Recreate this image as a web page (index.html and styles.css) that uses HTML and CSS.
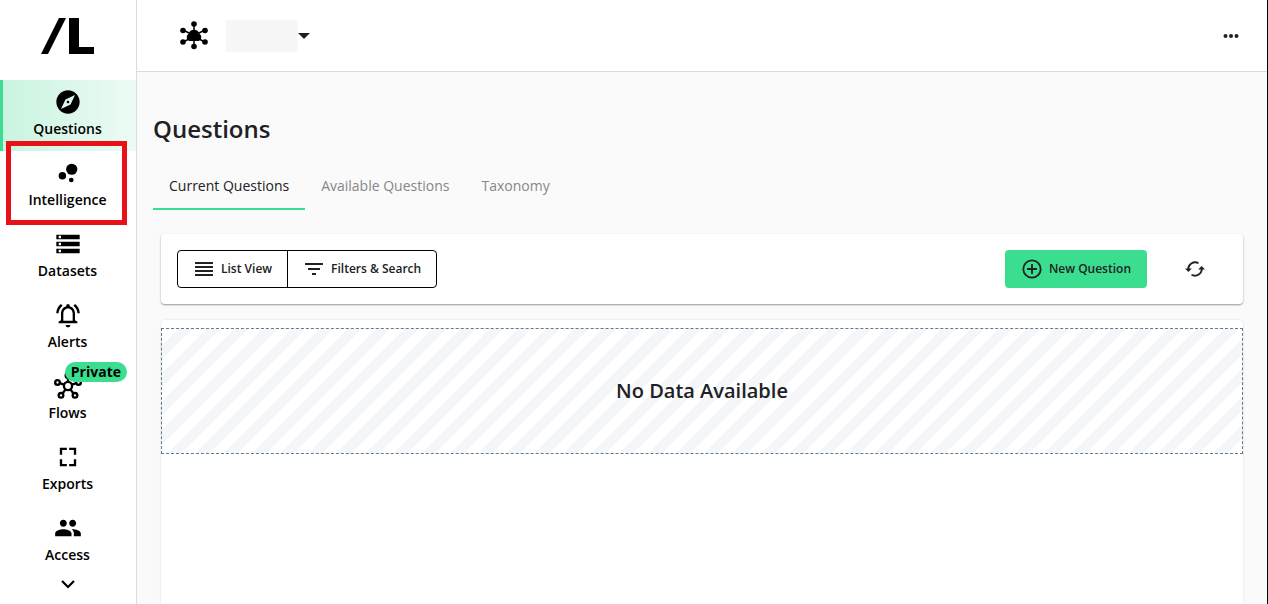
FILE: index.html
```html
<!DOCTYPE html>
<html lang="en">
<head>
<meta charset="utf-8">
<meta name="viewport" content="width=device-width, initial-scale=1">
<title>Questions</title>
<link rel="stylesheet" href="styles.css">
</head>
<body>
<div class="app">
  <nav class="sidebar" aria-label="Main">
    <a class="logo" href="#" aria-label="Home">
      <svg width="54" height="36" viewBox="0 0 54 36"><path d="M18 0h7L7 36H0z M28 0h10v29h15v7H28z"/></svg>
    </a>
    <a class="nav-item active" href="#">
      <svg class="icon" viewBox="0 0 24 24"><path d="M12 10.9c-.61 0-1.1.49-1.1 1.1s.49 1.1 1.1 1.1c.61 0 1.1-.49 1.1-1.1s-.49-1.1-1.1-1.1zM12 2C6.48 2 2 6.48 2 12s4.48 10 10 10 10-4.480 10-10S17.520 2 12 2zm2.190 12.190L6 18l3.810-8.190L18 6l-3.810 8.190z"/></svg>
      <span>Questions</span>
    </a>
    <a class="nav-item marked" href="#">
      <svg class="icon" viewBox="0 0 24 24"><circle cx="7.200" cy="14.400" r="3.200"/><circle cx="14.800" cy="18" r="2"/><circle cx="15.200" cy="8.800" r="4.800"/></svg>
      <span>Intelligence</span>
    </a>
    <a class="nav-item" href="#">
      <svg class="icon" viewBox="0 0 24 24"><path d="M2 20h20v-4H2v4zm2-3h2v2H4v-2zM2 4v4h20V4H2zm4 3H4V5h2v2zm-4 7h20v-4H2v4zm2-3h2v2H4v-2z"/></svg>
      <span>Datasets</span>
    </a>
    <a class="nav-item" href="#">
      <svg class="icon" viewBox="0 0 24 24"><path d="M12 22.500c1.100 0 2-.9 2-2h-4c0 1.100.9 2 2 2zm6-6V11c0-3.100-1.600-5.700-4.500-6.400V4c0-.8-.7-1.500-1.500-1.500s-1.500.7-1.500 1.500v.6C7.600 5.300 6 7.900 6 11v5.500l-2 1V19h16v-1.500l-2-1zm-2 .5H8v-6c0-2.500 1.500-4.500 4-4.500s4 2 4 4.500v6zM7.400 4.100L5.900 2.600C3.500 4.400 2 7.200 1.900 10.500h2c.1-2.700 1.500-5 3.500-6.400zm12.700 6.400h2c-.1-3.300-1.600-6.100-4-7.900l-1.500 1.500c2 1.400 3.400 3.700 3.500 6.400z"/></svg>
      <span>Alerts</span>
    </a>
    <a class="nav-item" href="#">
      <svg class="icon" viewBox="0 0 24 24"><g fill="none" stroke="#000" stroke-width="2"><circle cx="12" cy="12" r="3.500"/><circle cx="12" cy="3" r="2"/><circle cx="3" cy="9" r="2"/><circle cx="21" cy="9" r="2"/><circle cx="6" cy="20" r="2"/><circle cx="18" cy="20" r="2"/><path d="M12 5v3.500M4.900 9.600l3.800 1.300M19.100 9.600l-3.800 1.300M7.300 18.400l2.600-3.500M16.700 18.400l-2.600-3.500"/></g></svg>
      <span>Flows</span>
      <b class="badge">Private</b>
    </a>
    <a class="nav-item" href="#">
      <svg class="icon" viewBox="0 0 24 24"><path d="M5 10h2V6h4V4H5zM13 4v2h4v4h2V4zM5 14v6h6v-2H7v-4zM17 14v4h-4v2h6v-6z"/></svg>
      <span>Exports</span>
    </a>
    <a class="nav-item" href="#">
      <svg class="icon" viewBox="0 0 24 24"><path d="M16 11c1.660 0 2.990-1.340 2.990-3S17.660 5 16 5s-3 1.340-3 3 1.340 3 3 3zm-8 0c1.660 0 2.990-1.340 2.990-3S9.660 5 8 5 5 6.340 5 8s1.340 3 3 3zm0 2c-2.330 0-7 1.170-7 3.500V19h14v-2.500c0-2.330-4.670-3.500-7-3.500zm8 0c-.29 0-.62.02-.97.05 1.160.84 1.970 1.970 1.970 3.450V19h6v-2.500c0-2.330-4.670-3.500-7-3.500z"/></svg>
      <span>Access</span>
    </a>
    <button class="more-nav" type="button" aria-label="Scroll down"><svg width="16" height="14" viewBox="0 0 16 14"><path d="M2 4l6 6 6-6" fill="none" stroke="#000" stroke-width="2.200"/></svg></button>
  </nav>
  <div class="page">
    <header class="topbar">
      <svg width="30" height="30" viewBox="0 0 30 30"><g stroke="#000" stroke-width="1.500"><path d="M15 3v8M15 19v8M4 9l6 3M26 9l-6 3M4 21l6-3M26 21l-6-3"/></g><circle cx="15" cy="3" r="2.800"/><circle cx="15" cy="25.500" r="2.800"/><circle cx="4" cy="9.500" r="2.800"/><circle cx="26" cy="9.500" r="2.800"/><circle cx="4" cy="21" r="2.800"/><circle cx="26" cy="21" r="2.800"/><path d="M10.500 20a4 4 0 0 1-1-7.200 5.800 5.800 0 0 1 11 0 4 4 0 0 1-1 7.200z"/></svg>
      <button class="org" type="button" aria-label="Select organization"><span class="org-name"></span><i class="caret"></i></button>
      <button class="dots" type="button" aria-label="More"><svg width="16" height="6" viewBox="0 0 16 6" fill="#202124"><circle cx="2.500" cy="3" r="2"/><circle cx="8" cy="3" r="2"/><circle cx="13.500" cy="3" r="2"/></svg></button>
    </header>
    <main class="content">
      <h1>Questions</h1>
      <div class="tabs" role="tablist">
        <button class="tab selected" type="button" role="tab" aria-selected="true">Current Questions</button>
        <button class="tab" type="button" role="tab" aria-selected="false">Available Questions</button>
        <button class="tab" type="button" role="tab" aria-selected="false">Taxonomy</button>
      </div>
      <section class="card toolbar">
        <div class="group">
          <button type="button"><svg width="18" height="14" viewBox="0 0 18 14"><path d="M0 1h18M0 5h18M0 9h18M0 13h18" stroke="#202124" stroke-width="2"/></svg>List View</button>
          <button type="button"><svg width="18" height="14" viewBox="0 0 18 14"><path d="M0 2h18M3 7h12M7 12h4" stroke="#202124" stroke-width="2"/></svg>Filters &amp; Search</button>
        </div>
        <button class="primary" type="button"><svg width="20" height="20" viewBox="0 0 20 20"><g fill="none" stroke="#202124" stroke-width="1.800"><circle cx="10" cy="10" r="8.700"/><path d="M10 5v10M5 10h10"/></g></svg>New Question</button>
        <button class="refresh" type="button" aria-label="Refresh"><svg width="20" height="16" viewBox="0 0 20 16"><g fill="none" stroke="#202124" stroke-width="1.800"><path d="M3.200 9A7 7 0 0 1 13.500 2.200M16.800 7A7 7 0 0 1 6.500 13.800"/></g><path d="M0 7.500h6.800L3.400 11zM20 8.500h-6.800L16.600 5z" fill="#202124"/></svg></button>
      </section>
      <section class="card results">
        <div class="empty">No Data Available</div>
      </section>
    </main>
  </div>
</div>
</body>
</html>
```
FILE: styles.css
```css
* { box-sizing: border-box; }
body {
  margin: 0;
  font-family: "Open Sans", "Noto Sans", sans-serif;
  font-size: 14px;
  color: #202124;
}
button {
  font: inherit;
  color: inherit;
  background: none;
  border: 0;
  padding: 0;
  cursor: pointer;
}
svg { display: block; flex: none; }
.app {
  display: flex;
  height: 100vh;
  overflow: hidden;
  border-right: 1px solid #000;
}
.sidebar {
  flex: none;
  width: 137px;
  border-right: 1px solid #dcdcdc;
  background: #fff;
  display: flex;
  flex-direction: column;
}
.logo {
  flex: none;
  height: 80px;
  padding-top: 18px;
  display: flex;
  justify-content: center;
}
.nav-item {
  position: relative;
  flex: none;
  height: 71px;
  padding: 8px 1px 0 0;
  display: flex;
  flex-direction: column;
  align-items: center;
  color: #000;
  font-weight: 600;
  line-height: 20px;
  gap: 3px;
  text-decoration: none;
}
.icon { width: 28px; height: 28px; }
.active { background: linear-gradient(90deg, #c8f4df, #edfbf5); }
.active::before {
  content: "";
  position: absolute;
  inset: 0 auto 0 0;
  width: 3px;
  background: #3bdd8f;
}
.marked::after {
  content: "";
  position: absolute;
  inset: -10px 9px -3px 6px;
  border: 5px solid #e81118;
}
.badge {
  position: absolute;
  top: -2px;
  right: 9px;
  padding: 0 6px;
  border-radius: 10px;
  background: #3bdd8f;
  font-weight: 700;
}
.more-nav { align-self: center; }
.page {
  flex: 1;
  min-width: 0;
  display: flex;
  flex-direction: column;
  background: #fafafa;
}
.topbar {
  flex: none;
  height: 72px;
  padding: 0 28px 0 42px;
  display: flex;
  align-items: center;
  background: #fff;
  border-bottom: 1px solid #dcdcdc;
}
.org {
  display: flex;
  align-items: center;
  margin-left: 17px;
}
.org-name { width: 72px; height: 32px; background: #f7f7f7; }
.caret {
  border: 6px solid transparent;
  border-top-color: #202124;
  border-bottom: 0;
}
.dots { margin-left: auto; }
.content {
  flex: 1;
  display: flex;
  flex-direction: column;
  padding: 40px 24px 0 16px;
}
h1 {
  margin: 0;
  font-size: 24px;
  font-weight: 600;
  line-height: 34px;
}
.tabs { display: flex; margin: 16px 0 24px; }
.tab {
  height: 48px;
  padding: 0 16px;
  border-bottom: 2px solid transparent;
  color: #86868a;
}
.selected { color: #202124; border-color: #3bdd8f; }
.card {
  margin-left: 8px;
  background: #fff;
  border-radius: 4px;
  box-shadow: 0 1px 2px rgba(0, 0, 0, 0.4);
}
.toolbar {
  display: flex;
  align-items: center;
  padding: 16px 38px 16px 16px;
  font-size: 12px;
  font-weight: 600;
  line-height: 18px;
}
.group {
  display: flex;
  height: 38px;
  border: 1px solid #000;
  border-radius: 4px;
}
.group button {
  display: flex;
  align-items: center;
  gap: 8px;
  padding: 0 15px 0 17px;
}
.group button + button { border-left: 1px solid #000; }
.primary {
  display: flex;
  align-items: center;
  gap: 7px;
  height: 38px;
  margin-left: auto;
  padding: 0 16px 0 17px;
  border-radius: 4px;
  background: #3bdd8f;
}
.refresh { margin-left: 38px; }
.results {
  flex: 1;
  margin-top: 16px;
  padding-top: 8px;
  border-radius: 4px 4px 0 0;
  box-shadow: 0 0 2px rgba(0, 0, 0, 0.15);
}
.empty {
  height: 126px;
  display: flex;
  align-items: center;
  justify-content: center;
  border: 1px dashed #607d8b;
  background: repeating-linear-gradient(-45deg, #fff 0 10px, #f5f6fa 10px 20px);
  font-size: 20px;
  font-weight: 600;
  line-height: 26px;
}
```
